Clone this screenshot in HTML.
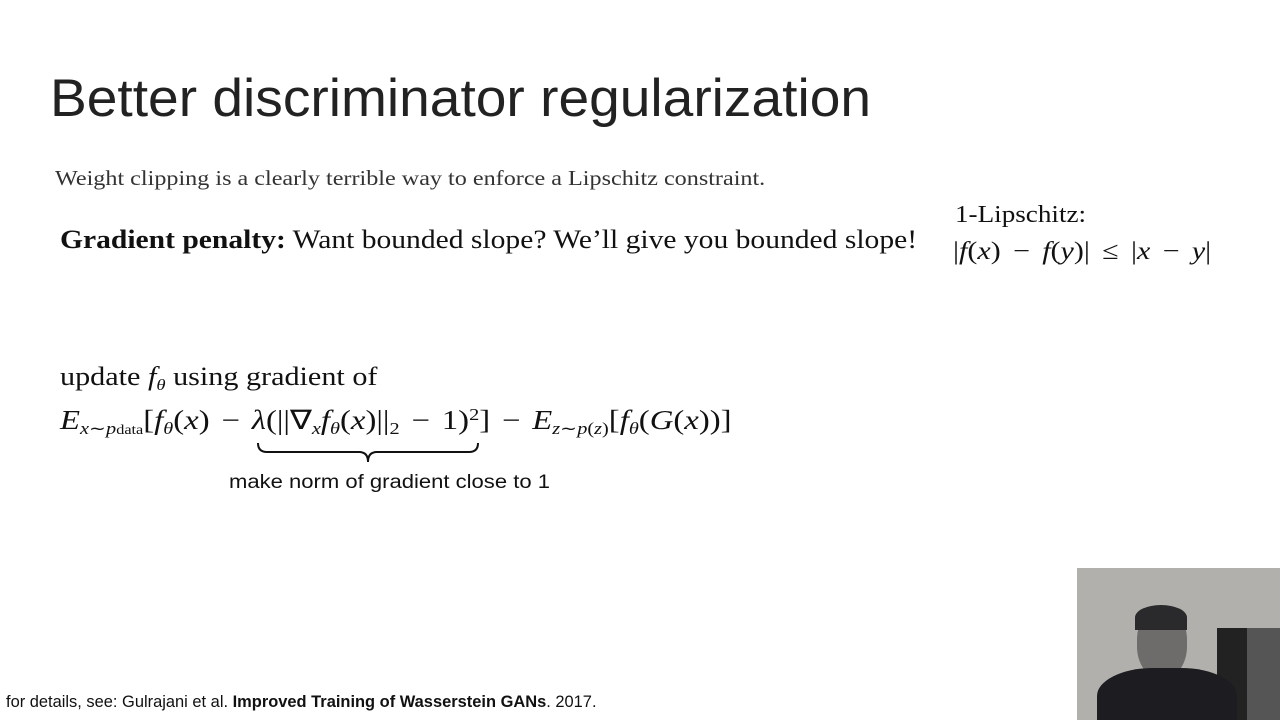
<!DOCTYPE html>
<html><head><meta charset="utf-8"><style>
body{margin:0;width:1280px;height:720px;background:#fff;position:relative;overflow:hidden;font-family:"Liberation Serif",serif;color:#111}
.a{position:absolute;white-space:nowrap;transform-origin:0 0}
i{font-style:italic}
sub{font-size:62%;vertical-align:-5px}
sup{font-size:62%;vertical-align:9px}
</style></head><body>
<div class="a" style="left:50px;top:68px;font-family:'Liberation Sans',sans-serif;font-size:53px;color:#222;transform:scaleX(1.04)">Better discriminator regularization</div>
<div class="a" style="left:55px;top:166px;font-size:21px;color:#333;transform:scaleX(1.15)">Weight clipping is a clearly terrible way to enforce a Lipschitz constraint.</div>
<div class="a" style="left:60px;top:225px;font-size:26px;transform:scaleX(1.137)"><b>Gradient penalty:</b> Want bounded slope? We’ll give you bounded slope!</div>
<div class="a" style="left:955px;top:202px;font-size:24px;transform:scaleX(1.13)">1-Lipschitz:</div>
<div class="a" style="left:953px;top:238px;font-size:25px;transform:scaleX(1.2);word-spacing:4px">|<i>f</i>(<i>x</i>) − <i>f</i>(<i>y</i>)| ≤ |<i>x</i> − <i>y</i>|</div>
<div class="a" style="left:60px;top:362px;font-size:26px;transform:scaleX(1.16)">update <i>f</i><sub><i>θ</i></sub> using gradient of</div>
<div class="a" style="left:60px;top:405px;font-size:27px;transform:scaleX(1.213);word-spacing:3px"><i>E</i><sub><i>x</i>∼<i>p</i><span style="font-size:80%">data</span></sub>[<i>f</i><sub><i>θ</i></sub>(<i>x</i>) − <i>λ</i>(||∇<sub><i>x</i></sub><i>f</i><sub><i>θ</i></sub>(<i>x</i>)||<sub>2</sub> − 1)<sup>2</sup>] − <i>E</i><sub><i>z</i>∼<i>p</i>(<i>z</i>)</sub>[<i>f</i><sub><i>θ</i></sub>(<i>G</i>(<i>x</i>))]</div>
<svg class="a" style="left:255px;top:440px" width="230" height="30"><path d="M3 3 Q3 12 12 12 L104 12 Q113 12 113 22 Q113 12 122 12 L214 12 Q223 12 223 3" fill="none" stroke="#111" stroke-width="2"/></svg>
<div class="a" style="left:229px;top:472px;font-family:'Liberation Sans',sans-serif;font-size:19px;transform:scaleX(1.16)">make norm of gradient close to 1</div>
<div class="a" style="left:6px;top:692px;font-family:'Liberation Sans',sans-serif;font-size:17px;transform:scaleX(0.967)">for details, see: Gulrajani et al. <b>Improved Training of Wasserstein GANs</b>. 2017.</div>
<div class="a" style="left:1077px;top:568px;width:203px;height:152px;background:#b2b0ac;overflow:hidden">
<div class="a" style="left:140px;top:60px;width:30px;height:92px;background:#222"></div>
<div class="a" style="left:170px;top:60px;width:33px;height:92px;background:#555"></div>
<div class="a" style="left:60px;top:40px;width:50px;height:70px;border-radius:45%;background:#6e6c6a"></div>
<div class="a" style="left:58px;top:37px;width:52px;height:25px;border-radius:50% 50% 0 0;background:#2a2a2c"></div>
<div class="a" style="left:20px;top:100px;width:140px;height:70px;border-radius:40% 40% 0 0;background:#1d1c20"></div>
</div>
</body></html>
